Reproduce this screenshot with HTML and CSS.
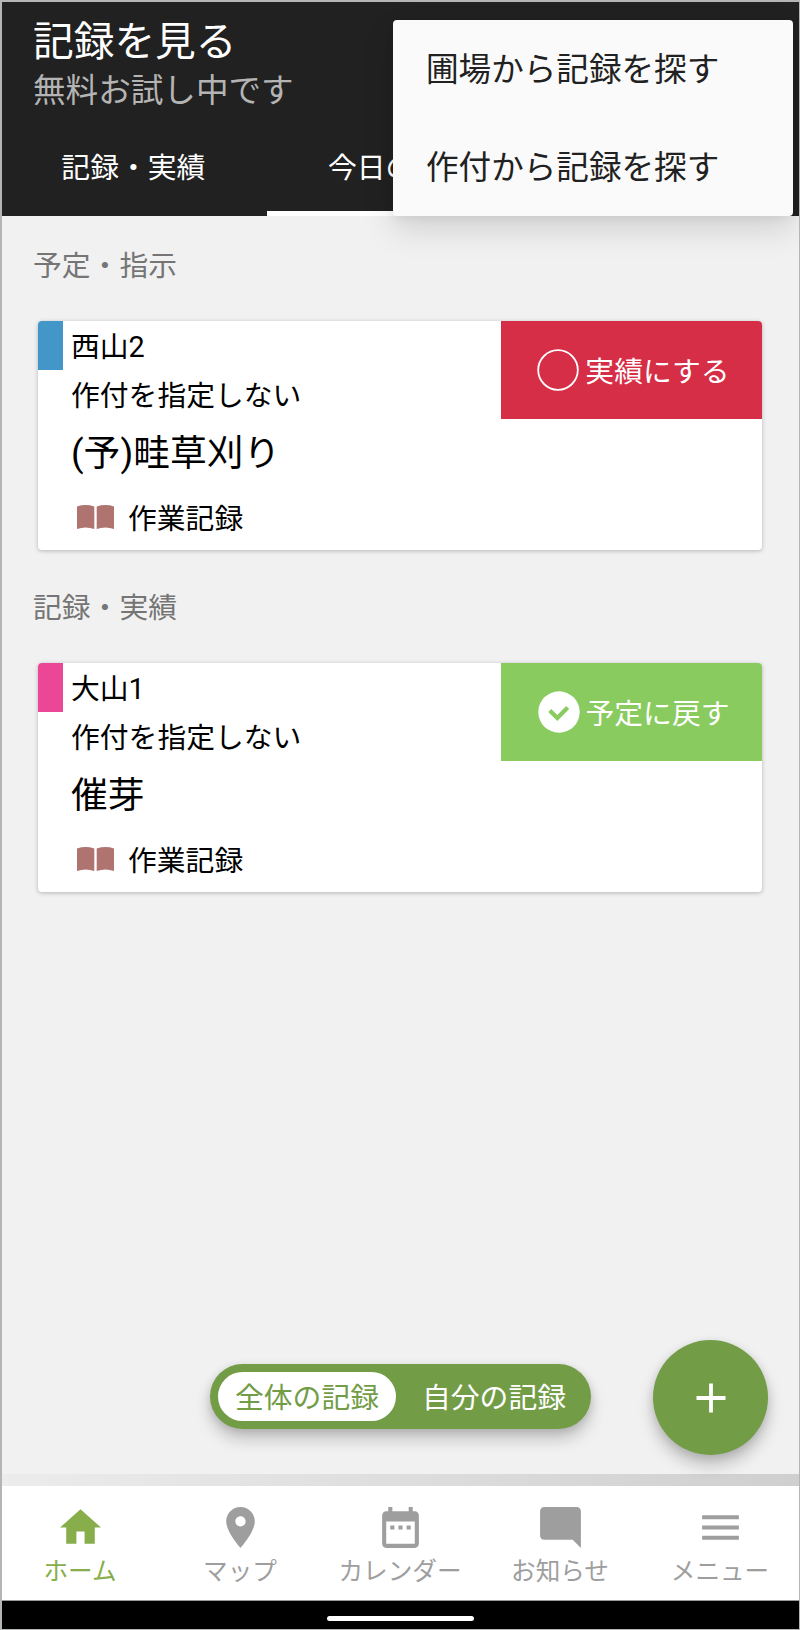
FILE: index.html
```html
<!DOCTYPE html>
<html lang="ja">
<head>
  <meta charset="UTF-8">
  <title>記録を見る</title>
  <link rel="stylesheet" href="styles.css">
</head>
<body>

  <div class="app">
    <header class="header">
      <h1>記録を見る</h1>
      <p class="subtitle">無料お試し中です</p>
      <div class="tabs">
        <div class="tab">記録・実績</div>
        <div class="tab active">今日の記録</div>
        <div class="tab"></div>
      </div>
    </header>

    <div class="popup-menu">
      <div class="popup-item">圃場から記録を探す</div>
      <div class="popup-item">作付から記録を探す</div>
    </div>

    <main class="content">
      <h2>予定・指示</h2>
      <div class="card">
        <div class="color-tag blue"></div>
        <div class="card-body">
          <div class="field">西山2</div>
          <div class="crop">作付を指定しない</div>
          <div class="work">(予)畦草刈り</div>
          <div class="category">
            <svg class="book" viewBox="0 0 37 24">
              <path d="M0 1.500 Q8.500 -1.300 17.300 1.500 V24 Q8.500 21 0 24 Z M19.700 1.500 Q28.500 -1.300 37 1.500 V24 Q28.500 21 19.700 24 Z"/>
            </svg>
            <span>作業記録</span>
          </div>
        </div>
        <button class="status-btn todo">
          <svg viewBox="0 0 42 42"><circle cx="21" cy="21" r="19.800" fill="none" stroke="#fff" stroke-width="1.800"/></svg>
          <span>実績にする</span>
        </button>
      </div>

      <h2>記録・実績</h2>
      <div class="card">
        <div class="color-tag pink"></div>
        <div class="card-body">
          <div class="field">大山1</div>
          <div class="crop">作付を指定しない</div>
          <div class="work">催芽</div>
          <div class="category">
            <svg class="book" viewBox="0 0 37 24">
              <path d="M0 1.500 Q8.500 -1.300 17.300 1.500 V24 Q8.500 21 0 24 Z M19.700 1.500 Q28.500 -1.300 37 1.500 V24 Q28.500 21 19.700 24 Z"/>
            </svg>
            <span>作業記録</span>
          </div>
        </div>
        <button class="status-btn done">
          <svg viewBox="0 0 42 42">
            <circle cx="21" cy="21" r="20.700" fill="#fff"/>
            <path d="M11.800 19.500 L19.300 27 L29.700 16.500" fill="none" stroke="#89cb5f" stroke-width="4.200"/>
          </svg>
          <span>予定に戻す</span>
        </button>
      </div>
    </main>

    <div class="toggle">
      <button class="toggle-btn selected">全体の記録</button>
      <button class="toggle-btn">自分の記録</button>
    </div>
    <button class="fab">
      <svg viewBox="0 0 30 30"><path d="M15 0.500V29.500M0.500 15H29.500" stroke="#fff" stroke-width="3.800"/></svg>
    </button>

    <div class="nav-shadow"></div>
    <nav class="bottom-nav">
      <div class="nav-item active">
        <svg viewBox="0 0 24 24"><path d="M10 20v-6h4v6h5v-8h3L12 3 2 12h3v8z"/></svg>
        <span>ホーム</span>
      </div>
      <div class="nav-item">
        <svg viewBox="0 0 24 24"><path d="M12 2C8.130 2 5 5.130 5 9c0 5.250 7 13 7 13s7-7.750 7-13c0-3.870-3.130-7-7-7zm0 9.500c-1.380 0-2.500-1.120-2.500-2.500s1.120-2.500 2.500-2.500 2.500 1.120 2.500 2.500-1.120 2.500-2.500 2.500z"/></svg>
        <span>マップ</span>
      </div>
      <div class="nav-item">
        <svg viewBox="0 0 24 24"><path d="M9 11H7v2h2v-2zm4 0h-2v2h2v-2zm4 0h-2v2h2v-2zm2-7h-1V2h-2v2H8V2H6v2H5c-1.110 0-1.990.9-1.990 2L3 20c0 1.100.89 2 2 2h14c1.100 0 2-.9 2-2V6c0-1.100-.9-2-2-2zm0 16H5V9h14v11z"/></svg>
        <span>カレンダー</span>
      </div>
      <div class="nav-item">
        <svg viewBox="0 0 24 24"><path d="M21.990 4c0-1.100-.89-2-1.990-2H4c-1.100 0-2 .9-2 2v12c0 1.100.9 2 2 2h14l4 4-.01-18z"/></svg>
        <span>お知らせ</span>
      </div>
      <div class="nav-item">
        <svg viewBox="0 0 24 24"><path d="M3 18h18v-2H3v2zm0-5h18v-2H3v2zm0-7v2h18V6H3z"/></svg>
        <span>メニュー</span>
      </div>
    </nav>
    <div class="system-bar"><div class="home-indicator"></div></div>
  </div>

</body>
</html>
```

FILE: styles.css
```css
* {
  box-sizing: border-box;
}
body {
  margin: 0;
  font-family: Roboto, "Noto Sans CJK JP", sans-serif;
  font-size: 28.8px;
}
h1, h2, p {
  margin: 0;
  font-weight: normal;
}
button {
  border: none;
  padding: 0;
  font: inherit;
  color: white;
}
.app {
  position: relative;
  display: flex;
  flex-direction: column;
  width: 800px;
  height: 1630px;
  background: #f1f1f1;
  overflow: hidden;
}
/* thin frame round the whole screen */
.app::after {
  content: "";
  position: absolute;
  inset: 0;
  z-index: 3;
  border: 1px solid #b4b6b6;
  border-top-width: 2px;
  border-left-width: 2px;
  pointer-events: none;
}

/* header */
.header {
  height: 216px;
  padding-top: 18px;
  background: #212121;
  color: white;
}
.header h1 {
  margin-left: 33px;
  font-size: 40.7px;
  line-height: 48px;
}
.subtitle {
  margin: 5px 0 10px 33px;
  font-size: 32.6px;
  line-height: 40px;
  color: #b4b4b4;
}
.tabs {
  display: grid;
  grid-template-columns: repeat(3, 1fr);
}
.tab {
  height: 95px;
  line-height: 94px;
  text-align: center;
}
.tab.active {
  border-bottom: 5px solid white;
}

/* popup over the header */
.popup-menu {
  position: absolute;
  top: 20px;
  right: 7px;
  z-index: 2;
  width: 400px;
  height: 196px;
  border-radius: 4px;
  background: #fafafa;
  box-shadow: 0 14px 32px rgba(0,0,0,0.13), 0 4px 10px rgba(0,0,0,0.05);
}
.popup-item {
  height: 98px;
  padding: 1px 0 0 33px;
  font-size: 32.6px;
  line-height: 98px;
  color: #212121;
}

/* record list */
.content {
  flex: 1;
  padding: 25px 38px 0;
}
.content h2 {
  margin: 0 0 30px -5px;
  font-size: 28.8px;
  line-height: 50px;
  color: #757575;
}
.card {
  display: flex;
  align-items: flex-start;
  height: 229px;
  margin-bottom: 33px;
  border-radius: 4px;
  background: white;
  overflow: hidden;
  color: #000;
  box-shadow: 0 1px 4px rgba(0,0,0,0.25);
}
.color-tag {
  width: 25px;
  height: 49px;
}
.blue {
  background: #4296c8;
}
.pink {
  background: #ec4697;
}
.card-body {
  flex: 1;
  padding: 2px 0 0 8px;
}
.field, .crop {
  line-height: 49px;
}
.work {
  font-size: 36.8px;
  line-height: 66px;
}
.category {
  display: flex;
  align-items: center;
  height: 60px;
  padding-left: 6px;
  gap: 14px;
}
.category span {
  margin-top: -2px;
}
.book {
  width: 37px;
  height: 24px;
  fill: #b07470;
}
.status-btn {
  display: flex;
  align-items: center;
  justify-content: center;
  gap: 6px;
  width: 261px;
  height: 98px;
  padding-left: 4px;
}
.status-btn svg {
  width: 42px;
  height: 42px;
}
.status-btn span {
  margin-top: -2px;
}
.todo {
  background: #d62e46;
}
.done {
  background: #89cb5f;
}

/* floating controls */
.toggle {
  position: absolute;
  left: 210px;
  top: 1364px;
  display: flex;
  width: 381px;
  height: 65px;
  padding: 8px;
  border-radius: 33px;
  background: #739c47;
  box-shadow: 0 10px 16px rgba(0,0,0,0.2), 0 2px 8px rgba(0,0,0,0.12);
}
.toggle-btn {
  width: 178px;
  height: 49px;
  padding-bottom: 2px;
  border-radius: 25px;
  background: none;
}
.toggle-btn:last-child {
  margin-left: 9px;
}
.toggle-btn.selected {
  background: white;
  color: #739c47;
}
.fab {
  position: absolute;
  left: 653px;
  top: 1340px;
  display: flex;
  align-items: center;
  justify-content: center;
  width: 115px;
  height: 115px;
  border-radius: 50%;
  background: #739c47;
  box-shadow: 0 10px 16px rgba(0,0,0,0.22), 0 2px 8px rgba(0,0,0,0.1);
}
.fab svg {
  width: 30px;
  height: 30px;
}

/* bottom navigation */
.nav-shadow {
  height: 12px;
  background: linear-gradient(to right, #ececec, #cfcfcf);
}
.bottom-nav {
  display: grid;
  grid-template-columns: repeat(5, 1fr);
  height: 115px;
  padding-top: 17px;
  background: white;
  border-bottom: 1px solid #9a9a9a;
}
.nav-item {
  display: flex;
  flex-direction: column;
  align-items: center;
  font-size: 24.6px;
  line-height: 40px;
  color: #9e9e9e;
}
.nav-item svg {
  width: 49px;
  height: 49px;
  fill: currentColor;
}
.nav-item.active {
  color: #87ae4b;
}
.system-bar {
  height: 29px;
  padding-top: 15px;
  background: black;
}
.home-indicator {
  width: 147px;
  height: 5px;
  margin: 0 auto;
  border-radius: 3px;
  background: white;
}
```
